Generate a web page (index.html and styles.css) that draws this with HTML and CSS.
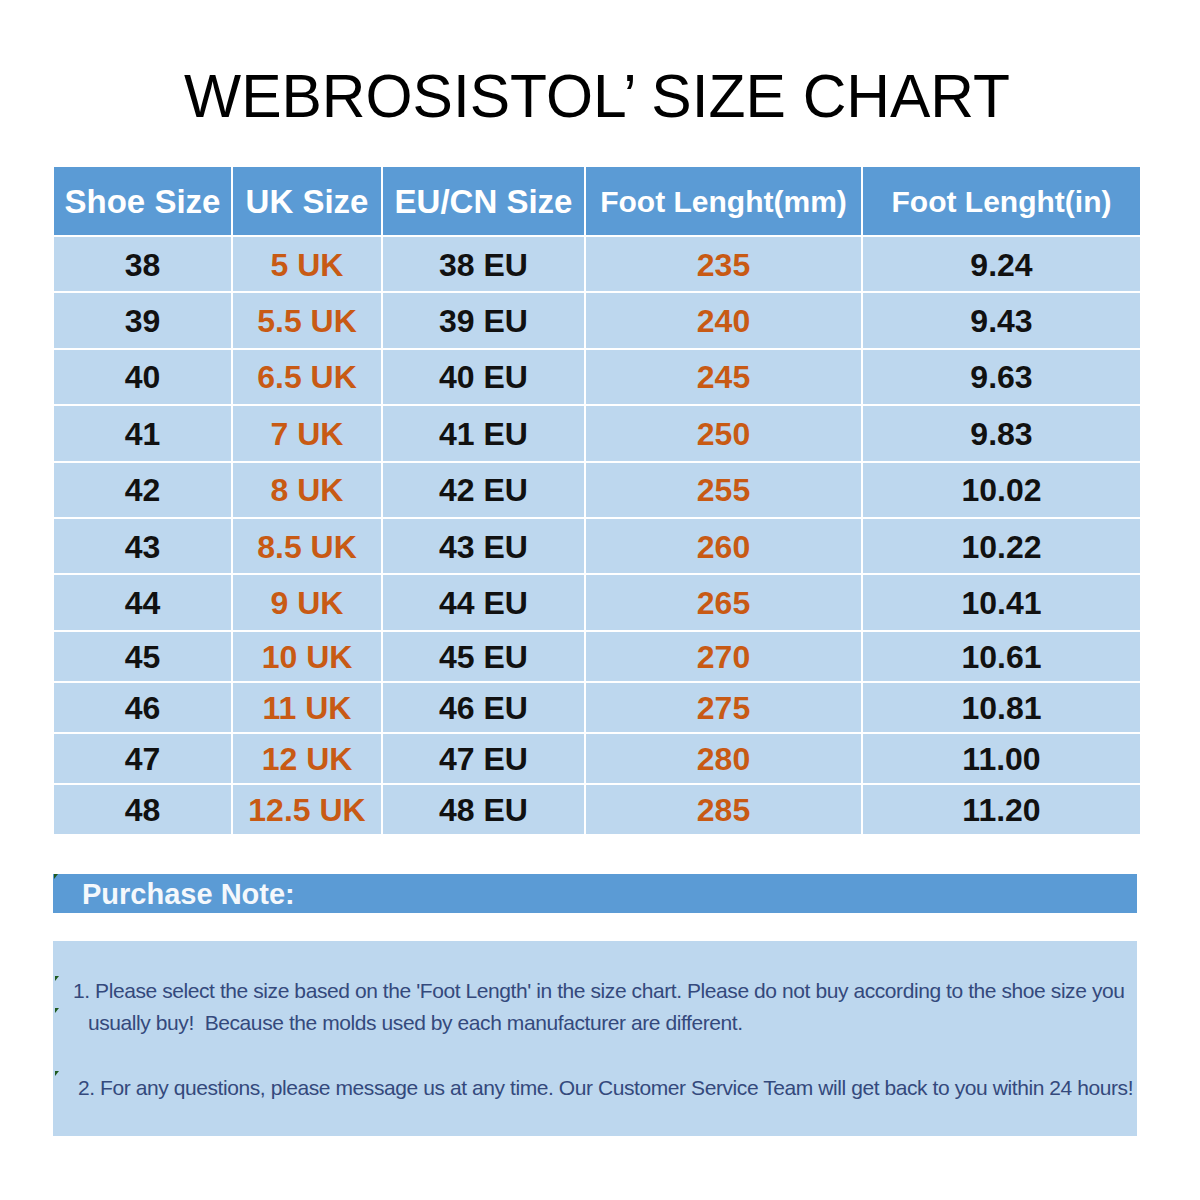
FILE: index.html
```html
<!DOCTYPE html>
<html lang="en">
<head>
<meta charset="utf-8">
<title>WEBROSISTOL’ SIZE CHART</title>
<link rel="stylesheet" href="styles.css">
</head>
<body>
<div class="page">
  <h1 class="title">WEBROSISTOL’ SIZE CHART</h1>

  <div class="chart">
    <div class="hd">Shoe Size</div>
    <div class="hd">UK Size</div>
    <div class="hd">EU/CN Size</div>
    <div class="hd hd-sm">Foot Lenght(mm)</div>
    <div class="hd hd-sm">Foot Lenght(in)</div>

    <div class="c">38</div><div class="c o">5 UK</div><div class="c">38 EU</div><div class="c o">235</div><div class="c">9.24</div>
    <div class="c">39</div><div class="c o">5.5 UK</div><div class="c">39 EU</div><div class="c o">240</div><div class="c">9.43</div>
    <div class="c">40</div><div class="c o">6.5 UK</div><div class="c">40 EU</div><div class="c o">245</div><div class="c">9.63</div>
    <div class="c">41</div><div class="c o">7 UK</div><div class="c">41 EU</div><div class="c o">250</div><div class="c">9.83</div>
    <div class="c">42</div><div class="c o">8 UK</div><div class="c">42 EU</div><div class="c o">255</div><div class="c">10.02</div>
    <div class="c">43</div><div class="c o">8.5 UK</div><div class="c">43 EU</div><div class="c o">260</div><div class="c">10.22</div>
    <div class="c">44</div><div class="c o">9 UK</div><div class="c">44 EU</div><div class="c o">265</div><div class="c">10.41</div>
    <div class="c">45</div><div class="c o">10 UK</div><div class="c">45 EU</div><div class="c o">270</div><div class="c">10.61</div>
    <div class="c">46</div><div class="c o">11 UK</div><div class="c">46 EU</div><div class="c o">275</div><div class="c">10.81</div>
    <div class="c">47</div><div class="c o">12 UK</div><div class="c">47 EU</div><div class="c o">280</div><div class="c">11.00</div>
    <div class="c">48</div><div class="c o">12.5 UK</div><div class="c">48 EU</div><div class="c o">285</div><div class="c">11.20</div>
  </div>

  <div class="note-bar"><span class="tick tick-bar"></span>Purchase Note:</div>

  <div class="notes">
    <p class="note note-1"><span class="tick t1"></span><span class="tick t2"></span>1. Please select the size based on the 'Foot Length' in the size chart. Please do not buy according to the shoe size you<br>usually buy!&nbsp; Because the molds used by each manufacturer are different.</p>
    <p class="note note-2"><span class="tick t3"></span>2. For any questions, please message us at any time. Our Customer Service Team will get back to you within 24 hours!</p>
  </div>
</div>
</body>
</html>
```

FILE: styles.css
```css
html, body {
  margin: 0;
  padding: 0;
  background: #ffffff;
}

.page {
  width: 1200px;
  height: 1200px;
  font-family: "Liberation Sans", Arial, sans-serif;
  padding: 0 0 0 54px;
  box-sizing: border-box;
}

.title {
  margin: 0;
  padding-top: 66px;
  width: 1086px;
  font-size: 60.5px;
  line-height: 60px;
  font-weight: normal;
  text-align: center;
  color: #000;
  letter-spacing: 0;
}

.chart {
  margin-top: 41px;
  width: 1086px;
  display: grid;
  grid-template-columns: 177px 148px 201px 275px 277px;
  grid-template-rows: 68px repeat(7, 54.4px) repeat(4, 49px);
  column-gap: 2px;
  row-gap: 2px;
  background: #ffffff;
}

.hd {
  background: #5b9bd5;
  color: #ffffff;
  font-weight: bold;
  font-size: 33px;
  display: flex;
  align-items: center;
  justify-content: center;
  white-space: nowrap;
  padding-top: 2px;
}

.hd-sm {
  font-size: 30px;
}

.c {
  background: #bdd7ee;
  color: #111111;
  font-weight: bold;
  font-size: 32px;
  display: flex;
  align-items: center;
  justify-content: center;
  white-space: nowrap;
  padding-top: 2px;
}

.o {
  color: #c85a14;
}

.note-bar {
  position: relative;
  margin-top: 40px;
  margin-left: -1px;
  width: 1084px;
  height: 39px;
  background: #5b9bd5;
  color: #f4f8fc;
  font-weight: bold;
  font-size: 29px;
  line-height: 41px;
  padding-left: 29px;
  box-sizing: border-box;
}

.notes {
  position: relative;
  margin-top: 28px;
  margin-left: -1px;
  width: 1084px;
  height: 195px;
  background: #bdd7ee;
  box-sizing: border-box;
  padding-top: 34px;
  color: #34497c;
  font-size: 21px;
  letter-spacing: -0.42px;
  word-spacing: 0;
}

.note {
  margin: 0;
  line-height: 32px;
  white-space: nowrap;
}

.note-1 {
  padding-left: 35px;
  text-indent: -15px;
}

.note-2 {
  margin-top: 33px;
  padding-left: 25px;
}

.tick {
  position: absolute;
  width: 0;
  height: 0;
  border-style: solid;
  border-color: #1f5a1f transparent transparent transparent;
  border-width: 5px 4px 0 0;
}

.tick-bar { left: 1px; top: 0; }
.t1 { left: 2px; top: 35px; }
.t2 { left: 2px; top: 67px; }
.t3 { left: 2px; top: 130px; }
```
